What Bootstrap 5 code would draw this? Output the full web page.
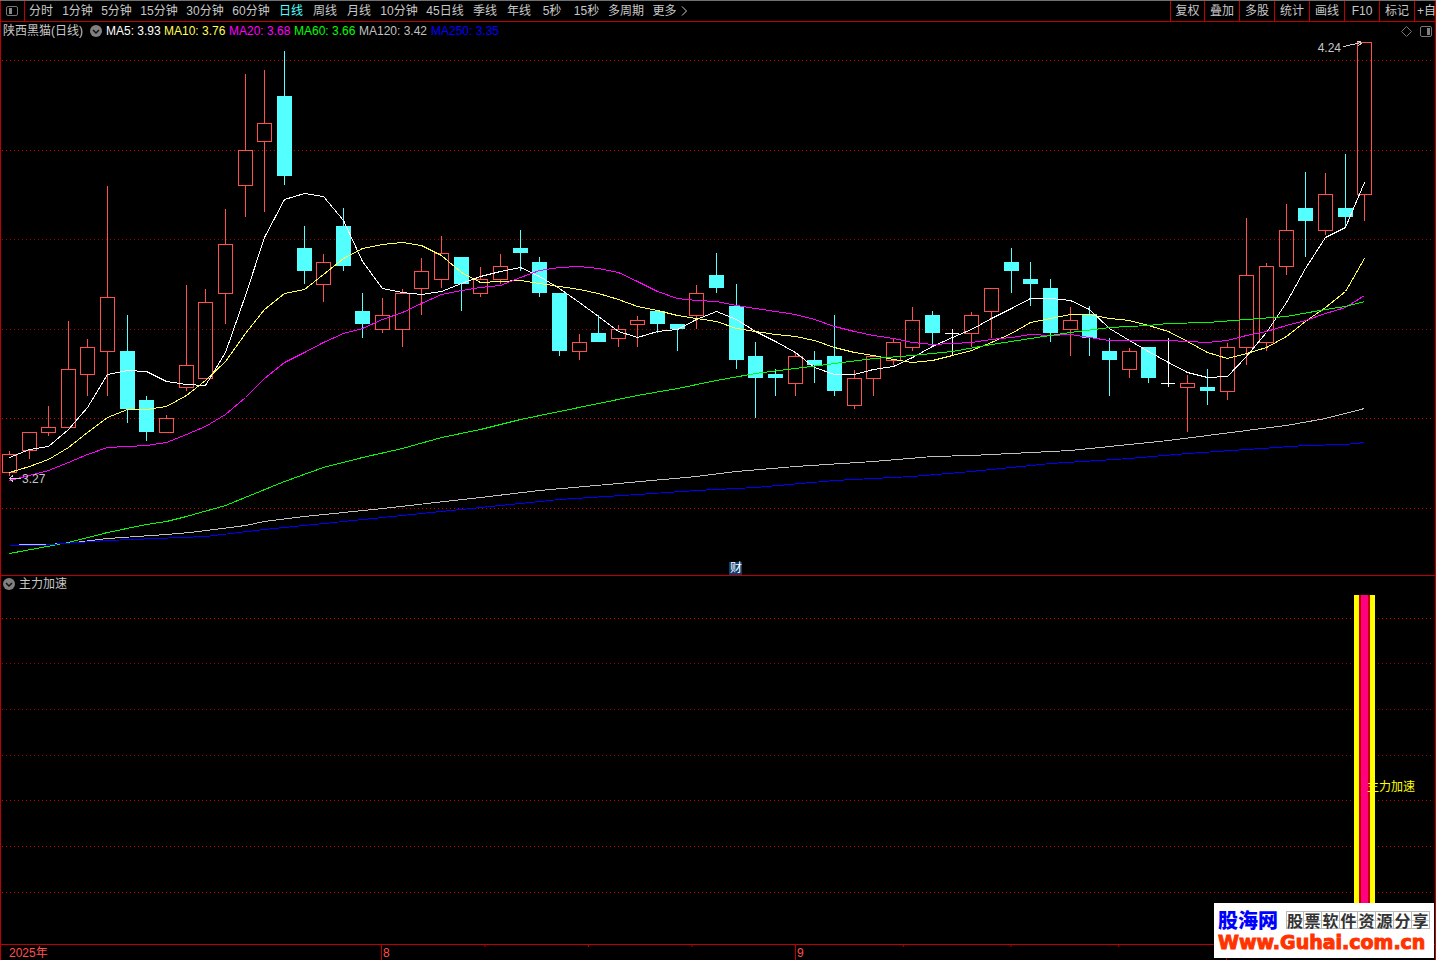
<!DOCTYPE html>
<html lang="zh-CN">
<head>
<meta charset="utf-8">
<meta name="viewport" content="width=device-width, initial-scale=1">
<title>陕西黑猫 日线</title>
<link href="https://cdn.jsdelivr.net/npm/bootstrap@5.3.0/dist/css/bootstrap.min.css" rel="stylesheet">
<style>
  :root { --line: #c00000; --soft: #c8c8c8; --rise: #ff5050; --fall: #54ffff; }
  body { background: #000; color: var(--soft); font: 12px/16px "Liberation Sans", "Noto Sans CJK SC", sans-serif; }
  .frame { border-top: 1px solid #707070; }
  .frame-body { border: 0 solid var(--line); border-width: 0 1px; }
  .toolbar { height: 21px; border-bottom: 1px solid var(--line); }
  .toolbar button { background: none; border: 0; padding: 0; color: var(--soft); white-space: nowrap; line-height: 21px; }
  .toolbar .pane-toggle { width: 24px; border-right: 1px solid var(--line); margin-right: -1px; }
  .period { width: 34px; }
  .period.p3 { width: 39px; }
  .period.p4 { width: 46px; }
  .period.s1 { width: 32px; }
  .period.s2 { width: 37px; }
  .period.w3 { width: 42px; }
  .toolbar .period.active { color: var(--fall); }
  .toolbar .tool { width: 35px; border-left: 1px solid var(--line); }
  .toolbar .tool:first-child { width: 34px; }
  .toolbar .tool-last { width: 21px; padding-left: 2px; overflow: hidden; }
  .legend-row { height: 18px; }
  .stock-name { width: 89px; padding-left: 2px; }
  .drop { background: none; border: 0; padding: 0; width: 12px; height: 12px; display: flex; }
  .ma { width: 65px; }
  .ma.short { width: 58px; }
  .ma.long { width: 72px; }
  .c5 { color: #fff; } .c10 { color: #ffff54; } .c20 { color: #ff00ff; } .c60 { color: #00ff00; }
  .c120 { color: #c0c0c0; } .c250 { color: #0000ff; }
  .corner { padding-right: 2px; }
  .price-pane { flex: 535 1 0; min-height: 0; }
  .signal-head { height: 18px; border-top: 1px solid var(--line); padding: 0 0 1px 2px; }
  .signal-pane { flex: 351 1 0; min-height: 0; }
  svg { display: block; }
  .plot { shape-rendering: crispEdges; }
  .tag-high { right: 94px; top: 0; }
  .tag-low { left: 21px; top: 80.5%; }
  .event-mark { left: 50.8%; bottom: 0; width: 13px; height: 13px; line-height: 13px; background: #103c6c; color: #fff; }
  .signal-name { right: 20px; top: 53%; color: #ffff00; }
  .axis { height: 16px; border-top: 1px solid var(--line); color: var(--rise); line-height: 16px; }
  .axis-month { box-shadow: inset 1px 0 var(--line); }
  .axis-month span { padding-left: 2px; }
  .axis-ticks { background: linear-gradient(to right, var(--line) 1px, transparent 1px) 0 0 / 25% 2px repeat-x; }
  .brand { right: 2px; bottom: 2px; width: 220px; height: 55px; background: #fff; padding: 7px 4px 0; text-decoration: none; }
  .brand-cn { font: 900 20px/20px "Noto Sans CJK SC", sans-serif; color: #0000ff; }
  .brand-cell { width: 18px; height: 18px; background: linear-gradient(#ccc, #ccc) 0 8px / 100% 1px no-repeat; border: 1px solid #bbb; border-left-width: 0; font: 700 16px/17px "Noto Sans CJK SC", sans-serif; color: #333; text-align: center; }
  .brand-cell:first-child { border-left-width: 1px; }
  .brand-url { margin-top: 2px; font: 700 19px/20px "DejaVu Sans", sans-serif; color: #ff3300; -webkit-text-stroke: 1px #ff3300; white-space: nowrap; }
</style>
</head>
<body>
<div class="frame vh-100 d-flex flex-column overflow-hidden position-relative">
  <div class="frame-body flex-grow-1 d-flex flex-column">
    <header class="toolbar d-flex flex-shrink-0">
      <button class="pane-toggle d-flex align-items-center ps-1" aria-label="侧栏">
        <svg width="14" height="12" viewBox="0 0 14 12"><rect x="1.5" y="1.5" width="11" height="9" rx="1.5" fill="none" stroke="#777"/><rect x="4" y="3" width="3" height="6" fill="#888"/></svg>
      </button>
      <nav class="d-flex" aria-label="周期">
        <button class="period">分时</button><button class="period p3">1分钟</button><button class="period p3">5分钟</button><button class="period p4">15分钟</button><button class="period p4">30分钟</button><button class="period p4">60分钟</button><button class="period active">日线</button><button class="period">周线</button><button class="period">月线</button><button class="period p4">10分钟</button><button class="period p4">45日线</button><button class="period">季线</button><button class="period">年线</button><button class="period s1">5秒</button><button class="period s2">15秒</button><button class="period w3">多周期</button><button class="period p4 d-flex align-items-center justify-content-center">更多<svg class="ms-1" width="7" height="10" viewBox="0 0 7 10"><path d="M1 .5L5.5 5L1 9.5" fill="none" stroke="#c8c8c8"/></svg></button>
      </nav>
      <div class="d-flex ms-auto">
        <button class="tool">复权</button><button class="tool">叠加</button><button class="tool">多股</button><button class="tool">统计</button><button class="tool">画线</button><button class="tool">F10</button><button class="tool">标记</button><button class="tool tool-last">+自</button>
      </div>
    </header>

    <div class="legend-row d-flex align-items-center flex-shrink-0">
      <span class="stock-name text-nowrap">陕西黑猫(日线)</span>
      <button class="drop me-1" aria-label="指标菜单"><svg width="12" height="12" viewBox="0 0 12 12"><circle cx="6" cy="6" r="6" fill="#808080"/><path d="M3 5L6 8L9 5" fill="none" stroke="#111" stroke-width="1.5"/></svg></button>
      <span class="ma short c5">MA5: 3.93</span><span class="ma c10">MA10: 3.76</span><span class="ma c20">MA20: 3.68</span><span class="ma c60">MA60: 3.66</span><span class="ma long c120">MA120: 3.42</span><span class="ma long c250">MA250: 3.35</span>
      <span class="corner d-flex ms-auto">
        <svg class="me-2" width="11" height="11" viewBox="0 0 11 11"><path d="M5.5 .5L10.5 5.500L5.5 10.5L.5 5.5Z" fill="none" stroke="#777"/></svg>
        <svg width="13" height="11" viewBox="0 0 13 11"><rect x=".5" y=".5" width="11" height="10" rx="1.5" fill="none" stroke="#777"/><rect x="7" y="2" width="3" height="7" fill="#808080"/></svg>
      </span>
    </div>

    <main class="price-pane position-relative">
      <svg id="price" class="plot w-100 h-100" viewBox="1 40 1434 535" preserveAspectRatio="none" role="img" aria-label="日K线"></svg>
      <span class="tag-high position-absolute">4.24</span>
      <span class="tag-low position-absolute">3.27</span>
      <span class="event-mark position-absolute text-center">财</span>
    </main>

    <div class="signal-head d-flex align-items-center flex-shrink-0">
      <button class="drop me-1" aria-label="副图菜单"><svg width="12" height="12" viewBox="0 0 12 12"><circle cx="6" cy="6" r="6" fill="#808080"/><path d="M3 5L6 8L9 5" fill="none" stroke="#111" stroke-width="1.5"/></svg></button>
      <span>主力加速</span>
    </div>
    <section class="signal-pane position-relative">
      <svg id="signal" class="plot w-100 h-100" viewBox="1 593 1434 351" preserveAspectRatio="none" role="img" aria-label="主力加速"></svg>
      <span class="signal-name position-absolute">主力加速</span>
    </section>

    <footer class="axis d-flex flex-shrink-0">
      <div style="flex:380 1 0"><span class="ps-2">2025年</span></div>
      <div class="axis-month axis-ticks" style="flex:414 1 0"><span>8</span></div>
      <div class="axis-month axis-ticks" style="flex:431 1 0"><span>9</span></div>
      <div class="axis-month" style="flex:209 1 0"></div>
    </footer>
  </div>

  <a href="#" class="brand position-absolute">
    <span class="d-flex justify-content-between align-items-center">
      <span class="brand-cn">股海网</span>
      <span class="d-flex"><span class="brand-cell">股</span><span class="brand-cell">票</span><span class="brand-cell">软</span><span class="brand-cell">件</span><span class="brand-cell">资</span><span class="brand-cell">源</span><span class="brand-cell">分</span><span class="brand-cell">享</span></span>
    </span>
    <span class="brand-url d-block">Www.Guhai.com.cn</span>
  </a>
</div>

<script src="https://cdn.jsdelivr.net/npm/bootstrap@5.3.0/dist/js/bootstrap.bundle.min.js"></script>
<script>
  // Each bar: kind (R rise, C fall, W flat), high, body top, body bottom, low
  const bars = `R 451 454 472 476|R 432 432 450 459|R 406 427 432 436|R 321 369 427 427|R 339 347 374 396|R 186 297 351 396|C 315 351 409 423|C 396 400 432 441|R 415 418 432 432|R 285 365 387 391|R 289 302 378 378|R 209 244 293 324|R 74 150 185 217|R 70 123 141 212|C 51 96 176 185|C 226 248 271 284|R 254 262 284 302|C 208 226 266 271|C 293 311 324 338|R 298 315 329 333|R 289 293 329 347|R 258 271 288 315|R 236 253 279 288|C 257 257 284 311|R 267 279 293 297|R 254 266 279 284|C 230 248 253 271|C 257 262 293 297|C 293 293 351 356|R 334 342 351 360|C 315 333 342 342|R 325 329 338 347|R 316 320 324 347|C 311 311 324 333|C 324 324 329 351|R 285 293 315 329|C 253 275 288 293|C 284 306 360 369|C 342 356 378 418|C 369 374 378 396|R 352 356 383 396|C 351 360 365 383|C 315 356 391 396|R 370 378 405 409|R 356 356 378 396|R 338 342 360 365|R 307 320 347 351|C 311 315 333 346|W 329 333 333 355|R 312 315 333 347|R 288 288 311 338|C 248 262 271 293|C 262 279 284 306|C 279 288 333 342|R 307 320 329 356|C 306 314 338 356|C 338 351 360 396|R 348 351 369 378|C 347 347 378 383|W 338 383 383 387|R 375 383 387 432|C 369 387 391 405|R 343 347 391 400|R 218 275 347 365|R 263 266 342 351|R 204 230 266 275|C 172 208 221 257|R 173 194 230 235|C 154 208 217 226|R 42 42 194 221`.split('|').map(r => r.split(' '));
  const centres = [9,29,48,68,87,107,127,146,166,186,205,225,245,264,284,304,323,343,362,382,402,421,441,461,480,500,520,539,559,579,598,618,637,657,677,696,716,736,755,775,795,814,834,854,873,893,912,932,952,971,991,1011,1030,1050,1070,1089,1109,1129,1148,1168,1187,1207,1227,1246,1266,1286,1305,1325,1345,1364];
  const ma5 = [457,449,446,429,407,374,370,371,381,384,385,352,295,237,199,193,196,220,261,288,292,294,291,283,276,271,267,276,288,302,316,331,337,331,329,319,311,319,331,341,352,367,374,374,369,366,357,346,337,329,318,308,298,298,300,309,328,340,351,362,372,377,376,356,332,302,268,237,227,182];
  const ma10 = [472,466,459,447,432,417,409,409,406,395,380,361,333,309,293,289,274,258,248,244,242,245,255,272,282,281,280,283,286,289,293,299,306,310,315,318,321,328,331,334,336,340,347,352,355,359,362,360,355,350,342,333,322,318,314,314,318,320,325,331,341,352,358,353,347,336,321,307,291,258];
  const ma20 = [480,475,470,462,454,447,446,445,442,434,426,414,397,378,362,352,342,333,328,319,312,303,294,290,287,285,277,270,267,266,268,272,281,291,298,300,301,305,308,311,314,319,326,331,335,338,342,344,343,342,339,337,334,335,334,337,340,340,340,340,341,342,340,335,331,325,320,313,307,295];
  const ma60 = [[9,553],[68,542],[107,532],[146,524],[166,521],[186,516],[225,505],[284,481],[323,467],[362,457],[402,448],[441,437],[480,429],[520,419],[559,411],[598,403],[637,395],[677,388],[716,380],[755,373],[795,368],[834,363],[873,358],[912,355],[952,351],[991,344],[1030,338],[1070,332],[1109,327],[1148,325],[1168,323],[1207,322],[1246,319],[1286,316],[1325,309],[1345,306],[1364,301]];
  const ma120 = [[18,544],[48,544],[75,542],[107,538],[166,534],[190,532],[245,525],[264,521],[304,516],[382,508],[480,497],[539,490],[618,483],[696,476],[736,471],[795,466],[873,461],[932,456],[971,455],[1070,450],[1109,446],[1168,440],[1207,435],[1246,430],[1286,425],[1325,418],[1364,408]];
  const ma250 = [[9,545],[40,545],[62,543],[107,540],[205,536],[264,529],[343,521],[421,513],[480,507],[559,499],[637,494],[696,490],[755,487],[834,480],[912,476],[971,471],[1050,463],[1129,458],[1187,453],[1246,449],[1305,445],[1345,444],[1364,442]];

  const perBar = values => values.map((y, i) => [centres[i], y]);
  const grid = (y, dim) => `<path d="M2 ${y + .5}H1433" stroke="${dim ? '#a00000' : '#d00000'}" stroke-dasharray="1 3"/>`;
  const curve = (pts, color) => `<polyline fill="none" stroke="${color}" points="${pts.map(p => (p[0] + .5) + ',' + (p[1] + .5)).join(' ')}"/>`;

  function candle([kind, ...v], i) {
    const x = centres[i], [hi, top, bot, lo] = v.map(Number);
    if (kind === 'W') return `<path d="M${x + .5} ${hi}V${lo}M${x - 7} ${top + .5}H${x + 7}" stroke="#fff"/>`;
    if (kind === 'C') return `<path d="M${x + .5} ${hi}V${lo}" stroke="#54ffff"/><rect x="${x - 7}" y="${top}" width="15" height="${bot - top}" fill="#54ffff"/>`;
    return `<path d="M${x + .5} ${hi}V${top}M${x + .5} ${bot}V${lo}" stroke="#ff5050"/><rect x="${x - 6.5}" y="${top + .5}" width="14" height="${bot - top}" fill="none" stroke="#ff5050"/>`;
  }

  document.getElementById('price').innerHTML =
    grid(60) + grid(150) + grid(239, true) + grid(329, true) + grid(418) + grid(508) +
    bars.map(candle).join('') +
    curve(perBar(ma5), '#fff') + curve(perBar(ma10), '#ffff54') + curve(perBar(ma20), '#ff00ff') +
    curve(ma60, '#00ff00') + curve(ma120, '#c0c0c0') + curve(ma250, '#0000ff') +
    '<path d="M1343.5 46.5L1361.5 42.5M1357 41.5H1361M1358.5 45.5L1362.5 42.5M9.5 478.5H21M9.5 478.5L13 475.5M9.5 478.5L13 481.5" stroke="#d0d0d0" fill="none"/>';

  document.getElementById('signal').innerHTML =
    [618, 663, 709, 755, 800, 846, 892].map(y => grid(y, y > 640 && y < 780)).join('') +
    '<rect x="1352" y="595" width="25" height="349" fill="#000"/>' +
    '<rect x="1354" y="595" width="21" height="349" fill="#ffff00"/>' +
    '<rect x="1359" y="595" width="11" height="349" fill="#c00000"/>' +
    '<rect x="1361" y="595" width="7" height="349" fill="#ff0080"/>';
</script>
</body>
</html>
